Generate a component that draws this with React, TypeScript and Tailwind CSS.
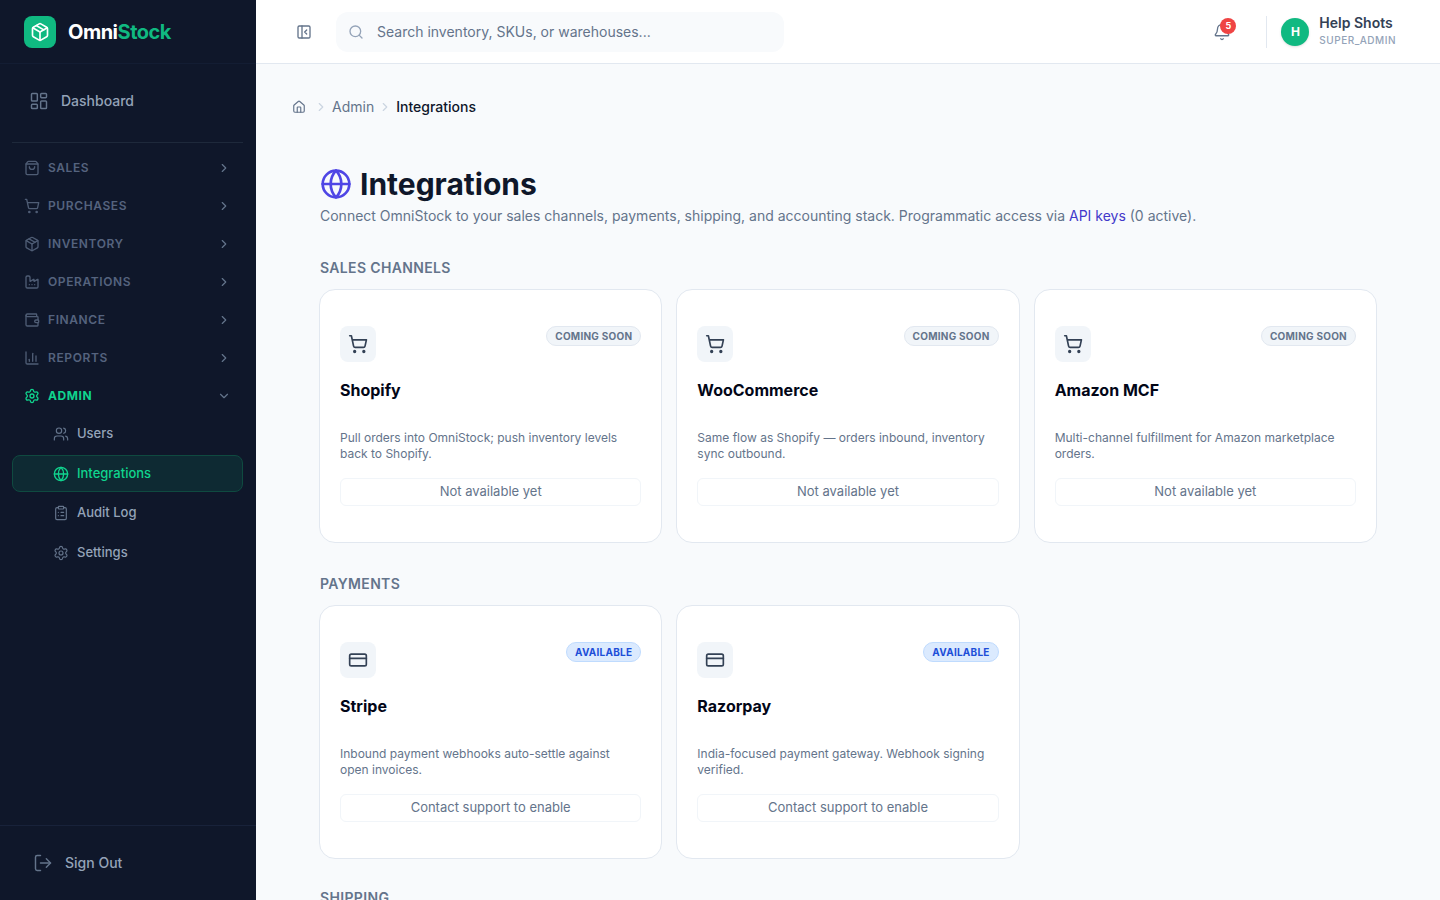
import {
  Bell,
  ChartColumn,
  ChevronDown,
  ChevronRight,
  ClipboardList,
  CreditCard,
  Factory,
  Globe,
  House,
  LayoutDashboard,
  LogOut,
  Package,
  PanelLeftClose,
  Search,
  Settings,
  ShoppingBag,
  ShoppingCart,
  Users,
  Wallet,
} from 'lucide-react';
import type { LucideIcon } from 'lucide-react';

const navGroups: { label: string; icon: LucideIcon }[] = [
  { label: 'SALES', icon: ShoppingBag },
  { label: 'PURCHASES', icon: ShoppingCart },
  { label: 'INVENTORY', icon: Package },
  { label: 'OPERATIONS', icon: Factory },
  { label: 'FINANCE', icon: Wallet },
  { label: 'REPORTS', icon: ChartColumn },
];

const salesChannels = [
  { name: 'Shopify', desc: 'Pull orders into OmniStock; push inventory levels back to Shopify.' },
  { name: 'WooCommerce', desc: 'Same flow as Shopify — orders inbound, inventory sync outbound.' },
  { name: 'Amazon MCF', desc: 'Multi-channel fulfillment for Amazon marketplace orders.' },
];

const payments = [
  { name: 'Stripe', desc: 'Inbound payment webhooks auto-settle against open invoices.' },
  { name: 'Razorpay', desc: 'India-focused payment gateway. Webhook signing verified.' },
];

function Sidebar() {
  return (
    <aside className="w-64 shrink-0 h-full bg-[#0f172a] flex flex-col">
      <div className="h-16 shrink-0 flex items-center gap-3 px-6 border-b border-[#131d33]">
        <div className="w-8 h-8 rounded-lg bg-[#10b981] flex items-center justify-center">
          <Package className="w-5 h-5 text-white" />
        </div>
        <span className="text-xl font-bold tracking-tight text-white">
          Omni<span className="text-[#10b981]">Stock</span>
        </span>
      </div>

      <div className="flex-1 pl-3 pr-[13px]">
        <div className="h-[79px] pb-[5px] flex items-center gap-3 pl-[17px] border-b border-[#1e293b]">
          <LayoutDashboard className="w-5 h-5 text-[#64748b]" strokeWidth={1.75} />
          <span className="text-sm font-medium text-[#94a3b8]">Dashboard</span>
        </div>

        <div className="pt-1.5">
          {navGroups.map((g) => (
            <div key={g.label} className="h-[38px] flex items-center pl-3 pr-3">
              <g.icon className="w-4 h-4 text-[#4f5d75]" strokeWidth={2} />
              <span className="ml-2 text-xs font-semibold tracking-wider text-[#55637e]">{g.label}</span>
              <ChevronRight className="w-3.5 h-3.5 ml-auto text-[#64748b]" />
            </div>
          ))}
          <div className="h-[38px] flex items-center pl-3 pr-3">
            <Settings className="w-4 h-4 text-[#10d48e]" strokeWidth={2} />
            <span className="ml-2 text-xs font-bold tracking-wider text-[#10d48e]">ADMIN</span>
            <ChevronDown className="w-3.5 h-3.5 ml-auto text-[#64748b]" />
          </div>
          <div className="h-[38px] flex items-center gap-2 pl-[41px]">
            <Users className="w-4 h-4 text-[#64748b]" strokeWidth={1.75} />
            <span className="text-[13px] font-medium text-[#94a3b8]">Users</span>
          </div>
          <div className="h-[37px] mt-0.5 flex items-center gap-2 pl-10 rounded-lg border border-[#0f4a40] bg-[#0e2a33]">
            <Globe className="w-4 h-4 text-[#10d48e]" strokeWidth={2} />
            <span className="text-[13px] font-medium text-[#10d48e]">Integrations</span>
          </div>
          <div className="h-[39px] mt-px flex items-center gap-2 pl-[41px]">
            <ClipboardList className="w-4 h-4 text-[#64748b]" strokeWidth={1.75} />
            <span className="text-[13px] font-medium text-[#94a3b8]">Audit Log</span>
          </div>
          <div className="h-[40px] mt-px flex items-center gap-2 pl-[41px]">
            <Settings className="w-4 h-4 text-[#64748b]" strokeWidth={1.75} />
            <span className="text-[13px] font-medium text-[#94a3b8]">Settings</span>
          </div>
        </div>
      </div>

      <div className="h-[75px] shrink-0 flex items-center gap-3 pl-[33px] border-t border-[#18223a]">
        <LogOut className="w-5 h-5 text-[#64748b]" strokeWidth={1.75} />
        <span className="text-sm font-medium text-[#94a3b8]">Sign Out</span>
      </div>
    </aside>
  );
}

function Topbar() {
  return (
    <header className="h-16 shrink-0 bg-white border-b border-[#e2e8f0] flex items-center pl-10 pr-11">
      <PanelLeftClose className="w-4 h-4 text-[#64748b]" />
      <div className="ml-[24px] w-[448px] h-10 rounded-xl bg-[#f8fafc] flex items-center pl-3">
        <Search className="w-4 h-4 text-[#94a3b8]" />
        <span className="ml-[13px] text-sm text-[#64748b]">Search inventory, SKUs, or warehouses...</span>
      </div>
      <div className="ml-auto flex items-center">
        <div className="relative">
          <Bell className="w-[18px] h-[18px] text-[#64748b]" strokeWidth={1.75} />
          <span className="absolute -top-[5px] -right-[5px] w-4 h-4 rounded-full bg-[#ef4444] flex items-center justify-center text-[9px] font-bold text-white">
            5
          </span>
        </div>
        <div className="ml-[35px] h-8 w-px bg-[#e2e8f0]" />
        <div className="ml-3.5 w-7 h-7 rounded-full bg-[#10b981] shadow-sm flex items-center justify-center text-xs font-bold text-white">
          H
        </div>
        <div className="ml-2.5 mb-px flex flex-col">
          <span className="text-sm leading-[18px] font-semibold text-[#334155]">Help Shots</span>
          <span className="text-[10px] leading-[16px] font-medium text-[#94a3b8] tracking-wider">SUPER_ADMIN</span>
        </div>
      </div>
    </header>
  );
}

function IntegrationCard({
  name,
  desc,
  icon: Icon,
  available,
}: {
  name: string;
  desc: string;
  icon: LucideIcon;
  available?: boolean;
}) {
  return (
    <div className="h-[254px] bg-white border border-[#e2e8f0] rounded-2xl pt-9 px-5">
      <div className="flex items-start justify-between">
        <div className="w-9 h-9 rounded-lg bg-[#f1f5f9] flex items-center justify-center">
          <Icon className="w-5 h-5 text-[#334155]" />
        </div>
        {available ? (
          <span className="h-5 px-2 rounded-full border border-[#bfdbfe] bg-[#dbeafe] text-[10px] leading-[18px] font-bold tracking-wide text-[#1d4ed8]">
            AVAILABLE
          </span>
        ) : (
          <span className="h-5 px-2 rounded-full border border-[#e2e8f0] bg-[#f1f5f9] text-[10px] leading-[18px] font-bold tracking-wide text-[#64748b]">
            COMING SOON
          </span>
        )}
      </div>
      <h3 className="mt-4 text-base leading-6 font-bold text-[#020617]">{name}</h3>
      <p className="mt-7 h-8 text-xs leading-4 text-[#64748b]">{desc}</p>
      <div className="mt-4 h-7 rounded-md border border-[#f1f5f9] flex items-center justify-center text-[13px] text-[#64748b]">
        {available ? 'Contact support to enable' : 'Not available yet'}
      </div>
    </div>
  );
}

export default function App() {
  return (
    <div
      className="h-screen flex overflow-hidden bg-[#f8fafc]"
      style={{ fontFamily: 'Inter, "Liberation Sans", sans-serif' }}
    >
      <Sidebar />
      <div className="flex-1 min-w-0 flex flex-col">
        <Topbar />
        <main className="flex-1 overflow-hidden">
          <nav className="h-[86px] pl-9 flex items-center gap-1 text-sm pb-[1px]">
            <House className="w-3.5 h-3.5 mr-1 text-[#64748b]" />
            <ChevronRight className="w-3.5 h-3.5 text-[#cbd5e1]" />
            <span className="text-[#64748b]">Admin</span>
            <ChevronRight className="w-3.5 h-3.5 text-[#cbd5e1]" />
            <span className="font-medium text-[#0f172a]">Integrations</span>
          </nav>
          <div className="pl-[63px] pr-[63px] pt-4">
            <h1 className="flex items-center gap-2 text-3xl leading-9 font-bold text-[#0f172a]">
              <Globe className="w-8 h-8 ml-px text-[#4f46e5]" />
              Integrations
            </h1>
            <p className="mt-1 pl-px text-sm leading-5 text-[#64748b]">
              Connect OmniStock to your sales channels, payments, shipping, and accounting stack. Programmatic access via{' '}
              <span className="text-[#4338ca]">API keys</span> (0 active).
            </p>
            <h2 className="mt-8 pl-px text-sm leading-5 font-semibold tracking-wide text-[#64748b]">SALES CHANNELS</h2>
            <div className="mt-[11px] grid grid-cols-3 gap-[14px]">
              {salesChannels.map((c) => (
                <IntegrationCard key={c.name} {...c} icon={ShoppingCart} />
              ))}
            </div>
            <h2 className="mt-[31px] pl-px text-sm leading-5 font-semibold tracking-wide text-[#64748b]">PAYMENTS</h2>
            <div className="mt-[11px] grid grid-cols-3 gap-[14px]">
              {payments.map((c) => (
                <IntegrationCard key={c.name} {...c} icon={CreditCard} available />
              ))}
            </div>
            <h2 className="mt-[29px] pl-px text-sm leading-5 font-semibold tracking-wide text-[#64748b]">SHIPPING</h2>
          </div>
        </main>
      </div>
    </div>
  );
}
